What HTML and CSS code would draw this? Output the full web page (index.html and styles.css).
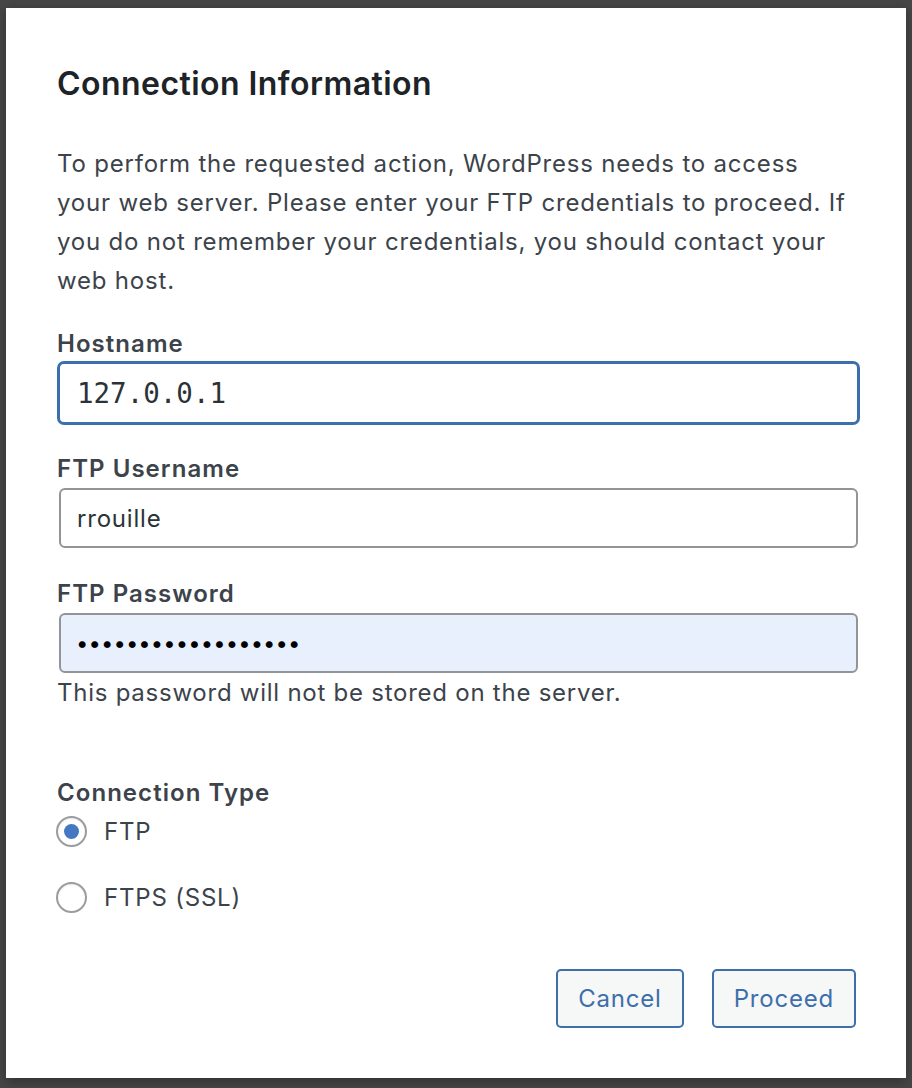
FILE: index.html
```html
<!DOCTYPE html>
<html lang="en">
<head>
<meta charset="utf-8">
<title>Connection Information</title>
<link rel="stylesheet" href="styles.css">
</head>
<body>
<div class="dialog">
  <h1 class="title">Connection Information</h1>
  <p class="intro">To perform the requested action, WordPress needs to access your web server. Please enter your FTP credentials to proceed. If you do not remember your credentials, you should contact your web host.</p>

  <label class="field">
    <span class="field-title">Hostname</span>
    <input class="input code is-focused" type="text" value="127.0.0.1">
  </label>

  <label class="field">
    <span class="field-title">FTP Username</span>
    <input class="input" type="text" value="rrouille">
  </label>

  <label class="field field-last">
    <span class="field-title">FTP Password</span>
    <input class="input autofill" type="password" value="abcdefghijklmnopqr">
  </label>
  <p class="note">This password will not be stored on the server.</p>

  <div class="conn">
    <div class="field-title">Connection Type</div>
    <label class="radio-row"><span class="radio is-checked"></span><span class="radio-text">FTP</span></label>
    <label class="radio-row second"><span class="radio"></span><span class="radio-text">FTPS (SSL)</span></label>
  </div>

  <div class="actions">
    <button class="btn" type="button">Cancel</button>
    <button class="btn" type="button">Proceed</button>
  </div>
</div>
</body>
</html>
```

FILE: styles.css
```css
html, body {
  margin: 0;
  padding: 0;
}

body {
  background: #474747;
  width: 912px;
  height: 1088px;
  overflow: hidden;
  font-family: Inter, "Liberation Sans", sans-serif;
  color: #3c434a;
}

.dialog {
  box-sizing: border-box;
  margin: 8px 0 0 6px;
  width: 900px;
  height: 1070px;
  background: #ffffff;
  padding: 56px 47px 0 50px;
  box-shadow: 0 3px 12px rgba(0, 0, 0, 0.35);
}

.title {
  margin: 0 0 40px 1px;
  font-size: 32px;
  line-height: 40px;
  font-weight: 600;
  color: #1d2327;
  letter-spacing: 0.45px;
}

.intro {
  max-width: 792px;
  margin: 0 0 24px 1px;
  font-size: 24px;
  line-height: 39px;
  letter-spacing: 0.8px;
}

.field {
  display: block;
  margin-bottom: 26px;
}

.field-last {
  margin-bottom: 0;
}

.field-title {
  display: block;
  margin-left: 1px;
  font-size: 24px;
  line-height: 39px;
  font-weight: 600;
  color: #3c434a;
  letter-spacing: 1.05px;
}

.input {
  display: block;
  box-sizing: border-box;
  margin: 0 0 0 3px;
  width: calc(100% - 4px);
  height: 60px;
  padding: 0 16px;
  border: 2px solid #929498;
  border-radius: 6px;
  background: #ffffff;
  font-family: Inter, "Liberation Sans", sans-serif;
  font-size: 24px;
  letter-spacing: 0.8px;
  color: #2c3338;
  outline: none;
}

.input.code {
  height: 62px;
  margin: -1px 0 -1px 2px;
  width: calc(100% - 2px);
  padding: 0 17px;
  font-family: "DejaVu Sans Mono", "Liberation Mono", monospace;
  font-size: 27.5px;
  letter-spacing: 0;
  color: #2c3338;
}

.input.is-focused {
  border-color: #3d6fab;
  box-shadow: 0 0 0 1px #3d6fab;
}

.input.autofill {
  background: #e8f0fe;
  color: #000000;
  font-size: 22px;
  letter-spacing: 0.1px;
  padding-left: 15px;
}

.note {
  margin: 0 0 61px 1px;
  font-size: 24px;
  line-height: 39px;
  letter-spacing: 0.75px;
}

.radio-row {
  display: flex;
  align-items: center;
  height: 39px;
  font-size: 24px;
  letter-spacing: 0.8px;
}

.radio-row.second {
  margin-top: 27px;
}

.radio {
  box-sizing: border-box;
  width: 31px;
  height: 31px;
  border: 2px solid #9a9ca0;
  border-radius: 50%;
  background: #ffffff;
  display: flex;
  align-items: center;
  justify-content: center;
  box-shadow: inset 0 1px 2px rgba(0, 0, 0, 0.08);
}

.radio.is-checked::after {
  content: "";
  width: 15px;
  height: 15px;
  border-radius: 50%;
  background: #4479c2;
}

.radio-text {
  margin-left: 17px;
  color: #3c434a;
}

.actions {
  display: flex;
  justify-content: flex-end;
  gap: 28px;
  margin-top: 52px;
  padding-right: 3px;
}

.btn {
  box-sizing: border-box;
  height: 59px;
  padding: 0 20px;
  border: 2px solid #3d6fab;
  border-radius: 5px;
  background: #f6f7f7;
  color: #3d6fab;
  font-family: Inter, "Liberation Sans", sans-serif;
  font-size: 24px;
  letter-spacing: 0.8px;
  cursor: pointer;
}
```
